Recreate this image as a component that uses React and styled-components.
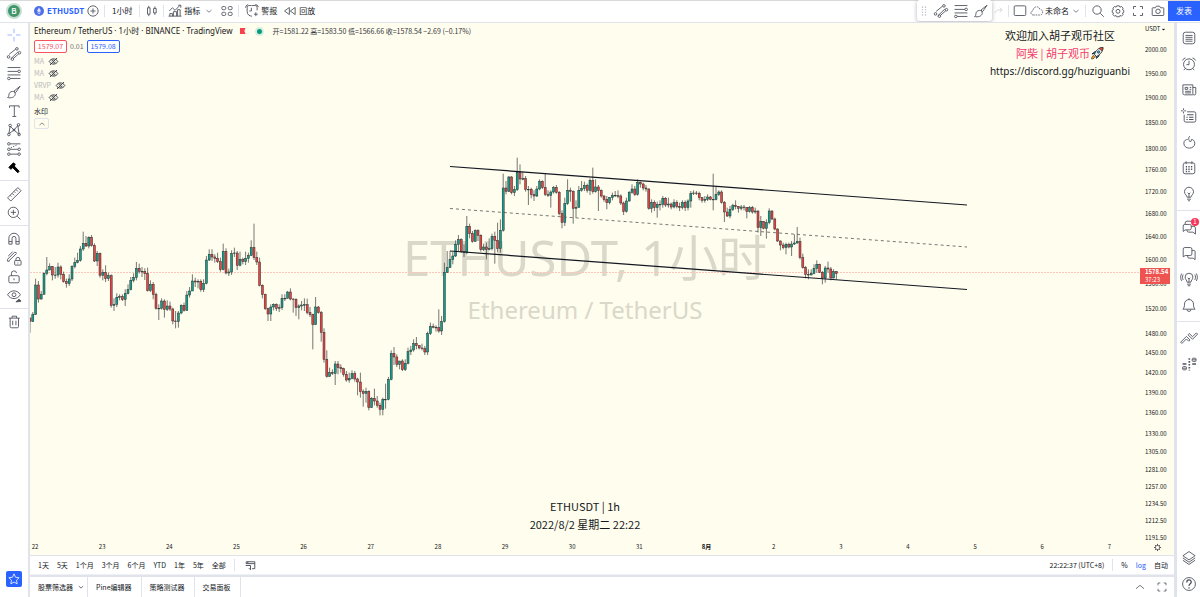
import React from "react";
import styled, { createGlobalStyle, css } from "styled-components";

const c = {
  ink: "#131722",
  icon: "#50535e",
  line: "#e0e3eb",
  blue: "#2962ff",
  red: "#ef5350",
  paper: "#fffded",
};

const Global = createGlobalStyle`
  * { box-sizing: border-box; }
  body { margin: 0; background: #fff; color: ${c.ink};
    font: 8px/12px "Noto Sans CJK SC", sans-serif; }
  button { border: 0; padding: 0; background: none; font: inherit; color: inherit; cursor: pointer; }
`;

/* ---------- icons, drawn on a 28 unit grid ---------- */

const icons = {
  cross: <path d="M14 4v7M14 17v7M4 14h7M17 14h7" />,
  channel: (
    <>
      <path d="M6.500 14.500 16.500 6.500M13 21 21.500 13.500M9 21.500 20 11" />
      <circle cx="5.500" cy="18.500" r="2" /><circle cx="18.500" cy="6" r="2" />
      <circle cx="11.500" cy="22" r="2" /><circle cx="22.500" cy="12" r="2" />
    </>
  ),
  fib: (
    <>
      <path d="M4 5.500h20M4 11.500h16M4 17h20M8 22.500h16" />
      <circle cx="22" cy="11.500" r="2" /><circle cx="6" cy="22.500" r="2" />
    </>
  ),
  brush: <path d="M12 13c-4 0-6 3-6 6 0 2-1 3-2 3.500 5 1.500 11 0 12-5 0-2-1.500-4.500-4-4.500zM14 12.500 23.500 5M16.500 15 23.500 5M14 12.500l2.500 2.500" />,
  text: <path d="M7 9V6h15v3M14.500 6v16M11.500 22.500h6" />,
  pattern: (
    <>
      <path d="M6 20 8 8l6 6 6-7 2 14-8-7-8 6" />
      <circle cx="8" cy="7" r="2" /><circle cx="21" cy="6" r="2" />
      <circle cx="6" cy="21" r="2" /><circle cx="22" cy="21" r="2" /><circle cx="14" cy="14" r="1.500" />
    </>
  ),
  forecast: (
    <>
      <path d="M8 6h16M8 14.500h12M8 22h12" /><path d="M9 12 20 7" strokeDasharray="2 2" />
      <circle cx="6" cy="6" r="2" /><circle cx="6" cy="14.500" r="2" /><circle cx="22" cy="14.500" r="2" />
      <circle cx="6" cy="22" r="2" /><circle cx="22" cy="22" r="2" />
    </>
  ),
  hammer: <path d="M6 13 13 6l3 2-1.500 3 7.500 8-2 2.500-8-8L9 16z" fill="#000" stroke="#000" />,
  ruler: <path d="M4 20 20 4l5 5L9 25zM8 16l2 2M11 13l3 3M14 10l2 2M17 7l3 3" />,
  zoom: <><circle cx="13" cy="13" r="8" /><path d="M19 19l5 5M9 13h8M13 9v8" /></>,
  magnet: <path d="M6 22V13a8 8 0 0 1 16 0v9h-5V13a3 3 0 0 0-6 0v9zM6 18h5M17 18h5" />,
  lockDraw: (
    <>
      <path d="M4 16 15 5M6 18.500 18 7M5 11l7-7M4 16v3h3M15 5l3 1" />
      <rect x="15" y="18" width="10" height="7" rx="1" /><path d="M17 18v-2a3 3 0 0 1 6 0v2M20 21v1.500" />
    </>
  ),
  lock: <><rect x="6" y="12" width="16" height="11" rx="2" /><path d="M10 12V9a4 4 0 0 1 8-1M14 16v3" /></>,
  eye: (
    <>
      <path d="M4 12c5-8 15-8 20 0-5 8-15 8-20 0z" /><circle cx="14" cy="12" r="3" />
      <path d="M17 23l5-4 3 3-5 1z" fill="currentColor" />
    </>
  ),
  trash: <path d="M6 8h17M11 8V5h7v3M8 8v13a2 2 0 0 0 2 2h9a2 2 0 0 0 2-2V8M12 12v7M17 12v7" />,
  plus: <><circle cx="14" cy="14" r="8" /><path d="M14 10v8M10 14h8" /></>,
  candles: <path d="M9 6v3M9 19v3M7 9h4v10H7zM18.500 7v3M18.500 17v3M16.500 10h4v7h-4z" />,
  indicators: <path d="M5 14l5-5 4 4 8-8M23 9V5h-4M6 22v-4h4v4M11.500 22v-7h5v7M18 22V12h4v10M4 22h20" />,
  chevron: <path d="M9 12l5 4.500 5-4.500" />,
  caret: <path d="M6 11h16l-8 7z" fill="currentColor" />,
  up: <path d="M7 17l7-6 7 6" />,
  grid: (
    <>
      <rect x="6" y="7" width="6" height="5" rx="2" /><rect x="16" y="7" width="6" height="5" rx="2" />
      <rect x="6" y="16" width="6" height="5" rx="2" /><rect x="16" y="16" width="6" height="5" rx="2" />
    </>
  ),
  grip: (
    <path d="M9 5h3M16 5h3M9 11h3M16 11h3M9 17h3M16 17h3M9 23h3M16 23h3" strokeWidth="2.500" />
  ),
  alertAdd: <path d="M13.500 5.500H9A3 3 0 0 0 6.500 9v6c0 5 4 7 7.500 7M13 9v5h-3M4 9a5 5 0 0 1 4-5M14 5.500h5A3 3 0 0 1 22 9v4M19 4a5 5 0 0 1 5 4M20 16v6M17 19h6" />,
  replay: <path d="M13 8.500v11L5.500 14zM22 8.500v11L14.500 14z" />,
  redo: <path d="M3 20c1-7 7-10 19-9M16 5l7 6-7 6" strokeWidth="2" />,
  frame: <rect x="5" y="6" width="18" height="15" rx="1.500" />,
  cloud: <path d="M8 21c-6 0-6-7-1-7.500C7 6 17 4 19 11c6 0 7 10 0 10z" strokeDasharray="3 1.500" />,
  search: <><circle cx="12.500" cy="12.500" r="6.500" /><path d="M17.500 17.500l5.500 5.500" /></>,
  gear: (
    <>
      <path d="M12 6h4l1 2 2.500-1 2.500 2.500L21 12l2 1v3l-2 1 1 2.500-2.500 2.500-2.500-1-1 2h-4l-1-2-2.500 1L6 19.500 7 17l-2-1v-3l2-1-1-2.500L8.500 7l2.500 1z" />
      <circle cx="14" cy="14.500" r="3" />
    </>
  ),
  sun: (
    <path d="M14 3v4M14 21v4M3 14h4M21 14h4M6 6l3 3M19 19l3 3M22 6l-3 3M9 19l-3 3M14 7.500a6.500 6.500 0 1 0 .1 0z" strokeWidth="2.200" />
  ),
  full: <path d="M7 11V7h4M17 7h4v4M21 17v4h-4M11 21H7v-4" />,
  camera: <><path d="M6 9h4l1.500-2.500h5L18 9h4a1 1 0 0 1 1 1v10a1 1 0 0 1-1 1H6a1 1 0 0 1-1-1V10a1 1 0 0 1 1-1z" /><circle cx="14" cy="14.500" r="3.500" /></>,
  star: <path d="M14 5l2.800 6 6.200.8-4.600 4.300 1.200 6.400L14 19.300 8.400 22.500l1.200-6.400L5 11.800l6.200-.8z" />,
  list: <><rect x="5" y="5" width="18" height="18" rx="3.500" /><path d="M8.500 10h11M8.500 13h11M8.500 16h11M8.500 19h11" /></>,
  clock: <><circle cx="14" cy="14.500" r="8.500" /><path d="M14 9v6h-4M4 8.500A6 6 0 0 1 8.500 4.500M19.500 4.500A6 6 0 0 1 24 8.500M8 21l-2 2.500M20 21l2 2.500" /></>,
  news: <><path d="M20 21.500H7a2.500 2.500 0 0 1-2.500-2.500V6H20v13.500a2 2 0 0 0 4.500 0V10H20" /><path d="M8 10h4v3H8zM15 10h2.500M15 13h2.500M8 16h9M8 18.500h9" /></>,
  data: <><path d="M11 7.500h11a2.500 2.500 0 0 1 2.500 2.500v11a2.500 2.500 0 0 1-2.500 2.500H9A2.500 2.500 0 0 1 6.500 21V12" /><path d="M5.500 2v8M1.500 6h8" strokeDasharray="3 2" /><path d="M11 12h10M10 16h2M14 16h7M10 19.500h2M14 19.500h7" strokeWidth="1.800" /></>,
  flame: <path d="M15 5c-3 4-1 6 1 9 1-1 2-2 2-4 2 0 5 2 5 6 0 10-17 10-17 0 0-5 4-6 6-6" />,
  calendar: <><rect x="5" y="6" width="18" height="17" rx="3" /><path d="M9.500 3.500V8M18.500 3.500V8" /><path d="M9 12h2M13 12h2M17 12h2M9 16h2M13 16h2M17 16h2M9 19.500h2M13 19.500h2" strokeWidth="2.200" /></>,
  bulb: <path d="M11 19c0-3-4-4-4-8.500a7 7 0 0 1 14 0c0 4.500-4 5.500-4 8.500zM11 22h6M12.500 24.500h3M12 12l2 2 2-2M14 14v5" />,
  chats: <path d="M8 10V8a3 3 0 0 1 3-3h8M5 21v-8.500A2.500 2.500 0 0 1 7.500 10H15a2.500 2.500 0 0 1 2.500 2.500V16A2.500 2.500 0 0 1 15 18.500H8zM11 18.500v1A2.500 2.500 0 0 0 13.500 22H20l4 3V15.500a2.500 2.500 0 0 0-2.500-2.500h-4" />,
  chat: <path d="M5 20V8a2.500 2.500 0 0 1 2.500-2.500H16A2.500 2.500 0 0 1 18.500 8v7.500A2.500 2.500 0 0 1 16 18H8zM12 18v2a2 2 0 0 0 2 2h6.500l3 2.500V12a2 2 0 0 0-2-2h-3" />,
  stream: <path d="M11 19c0-3-3-4-3-8a6 6 0 0 1 12 0c0 4-3 5-3 8zM11 22h6M12 24.500h4M12 12l2 2 2-2M14 14v5M5 7c-1.500 2.500-1.500 6 0 8.500M2.500 5.500c-2 4-2 7.500 0 11.500M23 7c1.500 2.500 1.500 6 0 8.500M25.500 5.500c2 4 2 7.500 0 11.500" />,
  bell: <path d="M4.500 20.500h19c-2-2-2.500-4-2.500-8a7 7 0 0 0-14 0c0 4-.5 6-2.500 8zM11 21a3 3 0 0 0 6 0M14 5.500V3.500" />,
  order: <path d="M1 20.500 10 11.500l5.500 5.500-2 2-3.500-3.500-7 7zM12.500 9l2-2 5 5L25.500 6l2 2-8 8z" />,
  dom: (
    <>
      <rect x="4" y="18" width="6" height="5" rx="1.500" /><path d="M4 20.500h6" />
      <rect x="19" y="5" width="6" height="5" rx="1.500" /><path d="M19 7.500h6" />
      <path d="M14.500 5v19" strokeWidth="2.500" strokeDasharray="2.500 2" />
      <path d="M19 14h6M4 14h6" strokeWidth="2" />
    </>
  ),
  layers: <path d="M14 4l9.500 6.500L14 17 4.500 10.500zM4.500 14 14 20.500l9.500-6.500M4.500 17.500 14 24l9.500-6.500" />,
  help: <><circle cx="14" cy="14" r="10" /><path d="M10.500 11.500c0-5 7-5 7-.5 0 3-3.500 2.500-3.500 6M14 19v2" strokeWidth="2" /></>,
  goto: <path d="M6 11V7h16v13h-5M9 7v4M6 10.500h16M14 14v8l-3-3M5 14h9" strokeWidth="1.800" />,
  hidden: <path d="M3 14c5-9 17-9 22 0-5 9-17 9-22 0zM5 23 23 5M10 14a4 4 0 0 1 5-4M18 14a4 4 0 0 1-5 4" strokeWidth="2.200" />,
};

const Svg = styled.svg`
  display: block;
  flex: none;
  width: ${(p) => p.$size}px;
  height: ${(p) => p.$size}px;
  fill: none;
  stroke: currentColor;
  stroke-width: 1.4;
`;
const Icon = ({ name, size = 18 }) => (
  <Svg $size={size} viewBox="0 0 28 28" aria-hidden="true">{icons[name]}</Svg>
);

/* ---------- page frame ---------- */

const Page = styled.div`
  display: flex;
  flex-direction: column;
  min-height: 100vh;
`;
const Header = styled.header`
  display: flex;
  align-items: center;
  height: 22px;
  border-top: 1px solid #d9d9d9;
  padding: 0 0 2px 6px;
  white-space: nowrap;
`;
const Body = styled.div`
  flex: 1;
  display: flex;
`;
const Rail = styled.nav`
  flex: none;
  display: flex;
  flex-direction: column;
  align-items: stretch;
  width: ${(p) => p.$width}px;
  padding-top: 2px;
  border-top: 1px solid ${c.line};
`;
const RailButton = styled.button`
  display: flex;
  align-items: center;
  justify-content: center;
  position: relative;
  height: ${(p) => p.$h}px;
  color: ${(p) => p.$color || c.icon};
`;
const RailRule = styled.hr`
  width: 100%;
  height: 1px;
  margin: 3px 0;
  border: 0;
  background: ${c.line};
`;
const Push = styled.div`
  margin-top: auto;
`;
const StarButton = styled.button`
  display: grid;
  place-items: center;
  width: 16px;
  height: 16px;
  margin: auto auto 10px 6px;
  border-radius: 2px;
  background: ${c.blue};
  color: #fff;
`;
const Badge = styled.span`
  position: absolute;
  top: 4px;
  right: 1px;
  width: 8px;
  height: 8px;
  border-radius: 50%;
  background: #f7365b;
  color: #fff;
  font-size: 6px;
  line-height: 8px;
  text-align: center;
`;

/* ---------- header parts ---------- */

const Avatar = styled.button`
  width: 16px;
  height: 16px;
  margin-right: 12px;
  border: 2px solid #c6dfd2;
  border-radius: 50%;
  background: #43966b;
  color: #fff;
  font-size: 8px;
  font-weight: 500;
  line-height: 12px;
`;
const Tool = styled.button`
  flex: none;
  display: flex;
  align-items: center;
  justify-content: center;
  gap: ${(p) => p.$gap || 0}px;
  min-width: ${(p) => p.$w || 20}px;
  height: 18px;
  color: ${(p) => p.$color || c.icon};
  font-weight: ${(p) => (p.$bold ? 700 : 400)};
`;
const Label = styled.span`
  color: ${(p) => p.$color || c.ink};
`;
const Rule = styled.span`
  flex: none;
  width: 1px;
  height: 12px;
  margin: 0 ${(p) => p.$gap || 2}px;
  background: ${c.line};
`;
const HeaderEnd = styled.div`
  display: flex;
  align-items: center;
  margin-left: auto;
`;
const Favorites = styled.div`
  display: flex;
  align-items: center;
  height: 21px;
  padding: 0 1px;
  border-radius: 3px;
  background: #fff;
  box-shadow: 0 1px 4px rgba(30, 34, 50, 0.35);
`;
const Grip = styled.span`
  width: 12px;
  color: #b2b5be;
`;
const Publish = styled.button`
  width: 32px;
  height: 19px;
  background: ${c.blue};
  box-shadow: 0 1px 0 ${c.blue};
  color: #fff;
`;

/* ---------- chart ---------- */

const Center = styled.main`
  flex: 1;
  min-width: 0;
  display: flex;
  flex-direction: column;
  border: solid ${c.line};
  border-width: 1px 3px 0 2px;
`;
const Chart = styled.section`
  flex: 1;
  display: grid;
  grid-template: minmax(0, 1fr) 15px / minmax(0, 1fr) 34px;
  background: ${c.paper};
`;
const Plot = styled.div`
  position: relative;
  display: grid;
  min-height: 516px;
`;
const Layer = styled.svg`
  position: absolute;
  inset: 0;
  width: 100%;
  height: 100%;
`;
const Watermark = styled.div`
  position: absolute;
  inset: 204px 0 auto;
  text-align: center;
  color: #d9d8c9;
  white-space: nowrap;
  font-family: "Noto Sans", "Noto Sans CJK SC", sans-serif;
`;
const WatermarkLine = styled.div`
  font-size: ${(p) => (p.$small ? 24 : 49)}px;
  line-height: ${(p) => (p.$small ? 46 : 60)}px;
`;
const Legend = styled.div`
  position: absolute;
  top: 2px;
  left: 4px;
  display: flex;
  flex-direction: column;
  align-items: flex-start;
  white-space: nowrap;
`;
const LegendRow = styled.div`
  display: flex;
  align-items: center;
  gap: ${(p) => p.$gap || 3}px;
  height: ${(p) => p.$h || 12}px;
  color: ${(p) => (p.$off ? "#b8b9bb" : c.ink)};
  font-size: 7px;
`;
const Title = styled.h1`
  margin: 0;
  font: 400 8px/12px "Noto Sans", "Noto Sans CJK SC", sans-serif;
`;
const Ohlc = styled.span`
  color: #33363f;
  margin-left: 6px;
`;
const Dot = styled.span`
  width: 9px;
  height: 9px;
  margin-left: 6px;
  border: 2px solid #d2efdd;
  border-radius: 50%;
  background: #089981;
`;
const Flag = styled.span`
  width: 6px;
  height: 6px;
  margin-left: 4px;
  background: #f7414e;
  clip-path: polygon(0 0, 100% 0, 80% 50%, 100% 100%, 0 100%);
`;
const Quote = styled.button`
  width: 33px;
  height: 13px;
  border: 1px solid ${(p) => p.$color};
  border-radius: 2px;
  background: #fff;
  color: ${(p) => p.$color};
  font-size: 7px;
  line-height: 11px;
`;
const Spread = styled.span`
  color: #6a6d78;
`;
const Collapse = styled.button`
  display: grid;
  place-items: center;
  width: 15px;
  height: 11px;
  border: 1px solid ${c.line};
  border-radius: 2px;
`;
const Note = styled.div`
  position: absolute;
  ${(p) =>
    p.$place === "top"
      ? css`top: 3px; right: 10px;`
      : css`bottom: 7px; left: 0; right: 0;`}
  text-align: center;
  font-size: 11px;
  line-height: 18px;
  white-space: nowrap;
`;
const NoteLine = styled.div`
  display: flex;
  align-items: center;
  justify-content: center;
  color: ${(p) => p.$color || c.ink};
`;
const NoteLink = styled.a`
  color: inherit;
  font-family: "Noto Sans", sans-serif;
  font-size: 10px;
  text-decoration: none;
`;
const PriceAxis = styled.div`
  position: relative;
  font-size: 6px;
  line-height: 10px;
`;
const Currency = styled.button`
  display: flex;
  align-items: center;
  gap: 1px;
  height: 12px;
  padding-left: 5px;
`;
const PriceTick = styled.span`
  position: absolute;
  left: 5px;
  transform: translateY(-50%);
`;
const PriceTag = styled.div`
  position: absolute;
  left: 0;
  width: 30px;
  padding: 0 5px;
  background: ${c.red};
  color: #fff;
  line-height: 8px;
`;
const TimeAxis = styled.div`
  position: relative;
  font-size: 6px;
  line-height: 14px;
`;
const TimeTick = styled.span`
  position: absolute;
  transform: translateX(-50%);
  font-weight: ${(p) => (p.$strong ? 700 : 400)};
`;
const AxisSettings = styled.button`
  display: grid;
  place-items: center;
  height: 15px;
`;

/* ---------- bars below the chart ---------- */

const RangeBar = styled.div`
  display: flex;
  align-items: center;
  height: 20px;
  padding: 0 6px 0 8px;
  border-top: 1px solid ${c.line};
  border-bottom: 1px solid #f0f1f5;
  font-size: 7px;
  white-space: nowrap;
`;
const Ranges = styled.div`
  display: flex;
  gap: 8px;
`;
const PanelBar = styled.div`
  display: flex;
  align-items: stretch;
  height: 22px;
  border-top: 2px solid ${c.line};
  font-size: 7px;
  white-space: nowrap;
`;
const PanelTab = styled.button`
  display: flex;
  align-items: center;
  gap: 2px;
  padding: 0 ${(p) => (p.$menu ? 0 : 9)}px 0 8px;
  border-right: 1px solid ${c.line};
`;

/* ---------- data ---------- */

// Each candle is "close high low", in thirds of a pixel below the block's base line.
const blocks = [
  [188, `331 320 365,311 303 333,222 203 312,264 210 275,250 240 266,187 184 250,177 138 193,167 157 178,192 165 208,192 168 203,168 155 200,190 163 205,212 182 215,218 203 230,204 190 225,166 163 210,155 140 172,148 125 157,114 105 152,97 62 120,105 75 108,79 76 112,104 72 107,150 97 153,127 120 165,193 125 200,185 175 208,203 163 213,194 185 210,283 190 290,280 262 300,259 247 288,257 250 268,266 250 270,248 235 285,236 220 250,208 198 238,200 187 214,172 153 208,181 158 188,181 168 198,188 172 207,239 170 242,220 208 243,250 213 265,292 245 296,292 280 327,270 262 296,295 265 320,285 268 300,294 272 300,330 290 340,332 300 352,306 300 350,283 280 310,298 275 302,252 240 300,240 228 260,210 190 240,213 200 228,211 205 232,236 205 242,217 205 243,147 135 220,130 115 150,138 115 150,142 130 155,152 125 156,176 140 182,121 98 178,186 112 190,183 173 195,128 118 192,126 110 138,163 120 177,145 122 166,152 140 160,142 122 162,133 125 155,110 88 135,140 38 147,153 122 162,223 140 226,250 220 262,293 248 297,309 290 330,288 280 330,280 277 298,292 277 300,290 280 303,262 250 297,262 250 270,243 240 262,264 232 268,265 262 305,290 262 315,285 280 325,282 270 298,281 262 300,305 263 310,311 288 318,341 308 415,288 258 342,305 285 308,364 300 392,445 352 455,496 418 500,485 470 498,487 475 492,459 450 522,470 450 490,473 460 485,490 470 497,507 480 512,502 485 515,488 478 505,504 480 512,513 500 553,542 485 560,547 535 587,541 530 575,590 538 598,562 558 590,570 533 583,583 555 590,595 575 613,565 560 613,565 518 593,505 498 568,428 418 508,438 408 462,460 430 468,450 450 475,476 445 480,457 445 480,422 410 460,417 405 432,398 385 422,404 378 415,411 402 415,413 398 418,423 405 432,368 362 432,347 335 372,349 338 352,350 343 362,360 295 365,332 315 372,184 155 335,170 120 186,146 120 170,135 123 160,100 88 138,86 72 120,122 82 126,124 100 138,46 15 130,68 38 82,91 60 95,59 55 92,73 55 90,116 70 122,108 98 120,115 95 145,113 82 118,76 68 118,88 62 158,113 35 124`],
  [118, `268 235 335,141 98 272,151 120 160,108 105 153,155 105 160,146 135 165,94 50 150,114 70 130,113 92 118,145 105 152,145 135 192,161 140 172,165 148 180,144 135 168,121 115 148,140 118 144,160 98 165,163 148 168,153 148 200,140 135 158,154 132 158,218 150 223,244 208 262,188 170 255,148 115 192,151 140 182,202 148 248,199 178 230,148 135 200,143 120 152,133 122 150,148 128 155,118 112 162,152 80 158,138 115 155,148 132 210,165 145 170,176 162 182,185 165 205,170 168 190,163 155 178,164 150 168,165 148 172,186 160 192,211 182 222,180 170 215,154 150 182,144 130 158,160 135 165,124 115 164,129 122 140,141 125 148,144 132 152,202 142 206,184 175 215,200 178 210,190 182 230,190 178 208,172 165 200,192 168 198,189 170 200,198 185 205,185 175 202,196 178 202,200 185 210,184 178 205,200 178 210,180 175 208,158 150 200,156 148 162,157 150 162,170 152 178,178 168 185,175 165 185,168 160 180,175 165 178,176 98 208,160 138 178,153 148 165,184 148 188,213 180 243,225 200 228,205 195 232,194 188 210,197 178 205,202 195 215,198 192 208,200 192 208,211 198 232,200 195 215,213 195 218,210 200 218,260 208 275,241 225 285,262 240 265,245 235 293,210 202 250,234 208 237,264 230 268,300 262 303,312 298 328,320 305 325,310 305 340,318 305 322,309 300 345,306 280 312,302 258 308,350 290 355,380 338 383,400 375 412,402 385 415,397 385 403,382 370 400,370 358 395,394 368 396,411 390 430,381 375 425,384 362 395,411 378 418,392 385 412,398 390 415`],
];

const candles = blocks
  .flatMap(([base, rows]) =>
    rows.split(",").map((row) => row.split(" ").map((v) => base + Number(v) / 3))
  )
  .map(([close, high, low], i, all) => ({
    x: 2.8 * i, close, high, low, open: i ? all[i - 1][0] : 295,
  }));

const PLOT_W = 1110;
const PLOT_H = 517;
const prices = [2000, 1950, 1900, 1850, 1800, 1760, 1720, 1680, 1640, 1600, 1560, 1520, 1480, 1450, 1420, 1390, 1360, 1330, 1305, 1281, 1257, 1234.5, 1212.5, 1191.5];
const priceTop = (p) => `${((27 + 942 * Math.log(2000 / p)) / PLOT_H) * 100}%`;
const days = ["22", "23", "24", "25", "26", "27", "28", "29", "30", "31", "8月", "2", "3", "4", "5", "6", "7"];
const dayLeft = (i) => `${((5 + 67.15 * i) / PLOT_W) * 100}%`;

const Candle = ({ x, open, close, high, low }) => {
  const top = Math.min(open, close);
  return (
    <g>
      <path d={`M${x} ${high}V${low}`} stroke="#3c3c3c" strokeWidth="0.7" />
      <rect
        x={x - 1} y={top} width="2" height={Math.max(Math.abs(open - close), 0.6)}
        fill={close <= open ? "#139d8b" : "#ee4140"} stroke="#26302f" strokeWidth="0.5"
      />
    </g>
  );
};

const leftTools = [
  ["cross", "channel", "fib", "brush", "text", "pattern", "forecast", "hammer"],
  ["ruler", "zoom"],
  ["magnet", "lockDraw", "lock", "eye"],
  ["trash"],
];
const rightTools = [
  ["list", "clock", "news", "data", "flame", "calendar", "bulb"],
  ["chats", "chat", "stream", "bell"],
  ["order", "dom"],
];

const RailGroups = ({ groups, h }) =>
  groups.map((group, i) => (
    <React.Fragment key={group[0]}>
      {i > 0 && <RailRule />}
      {group.map((name) => (
        <RailButton key={name} $h={h} $color={name === "cross" ? "#8fb0ff" : undefined} aria-label={name}>
          <Icon name={name} />
          {name === "chats" && <Badge>1</Badge>}
        </RailButton>
      ))}
    </React.Fragment>
  ));

const Rocket = () => (
  <svg width="14" height="14" viewBox="0 0 28 28" aria-hidden="true">
    <path d="M4 16l6-5 4 1 4 4 0 4-5 5-1-6-4-4z" fill="#1d8fc4" stroke="#111" strokeWidth="1.500" />
    <path d="M9 17C11 9 17 3 26 3c0 8-5 14-13 18z" fill="#eef0f2" stroke="#111" strokeWidth="1.500" />
    <path d="M26 3c0 3-1 5-2 7l-6-5c2-1 5-2 8-2z" fill="#e9573f" stroke="#111" />
    <circle cx="17" cy="12" r="2.500" fill="#2ba7df" stroke="#111" />
    <path d="M3 26c0-4 2-7 5-7l2 2c0 3-3 5-7 5z" fill="#f59b23" stroke="#111" />
  </svg>
);

export default function App() {
  return (
    <Page>
      <Global />
      <Header>
        <Avatar aria-label="B">B</Avatar>
        <Tool $bold $gap={3} $color={c.blue}>
          <svg width="10" height="10" viewBox="0 0 20 20" aria-hidden="true">
            <circle cx="10" cy="10" r="10" fill="#4f6fe8" />
            <path d="M10 3l4 7-4 2.500L6 10zM6 11.500l4 2.500 4-2.500-4 5.500z" fill="#dfe6ff" />
          </svg>
          ETHUSDT
        </Tool>
        <Tool $w={18} aria-label="compare"><Icon name="plus" /></Tool>
        <Rule />
        <Tool $w={30}><Label>1小时</Label></Tool>
        <Rule />
        <Tool $w={19} aria-label="candles"><Icon name="candles" /></Tool>
        <Rule />
        <Tool $w={34}><Icon name="indicators" /><Label>指标</Label></Tool>
        <Tool $w={18} aria-label="more"><Icon name="chevron" size={14} /></Tool>
        <Tool $w={17} aria-label="templates"><Icon name="grid" /></Tool>
        <Rule />
        <Tool $w={38}><Icon name="alertAdd" /><Label>警报</Label></Tool>
        <Tool $w={38}><Icon name="replay" /><Label>回放</Label></Tool>
        <HeaderEnd>
          <Favorites>
            <Grip><Icon name="grip" size={12} /></Grip>
            <Tool $w={21} aria-label="channel"><Icon name="channel" /></Tool>
            <Tool $w={20} aria-label="fib"><Icon name="fib" /></Tool>
            <Tool $w={20} aria-label="brush"><Icon name="brush" /></Tool>
          </Favorites>
          <Tool $w={14} $color="#c9cbd1" aria-label="redo"><Icon name="redo" size={10} /></Tool>
          <Rule />
          <Tool $w={16} aria-label="layout"><Icon name="frame" /></Tool>
          <Tool $w={40}><Icon name="cloud" size={16} /><Label>未命名</Label></Tool>
          <Tool $w={12} aria-label="more"><Icon name="chevron" size={14} /></Tool>
          <Rule />
          <Tool aria-label="search"><Icon name="search" /></Tool>
          <Tool aria-label="settings"><Icon name="gear" /></Tool>
          <Tool aria-label="full screen"><Icon name="full" /></Tool>
          <Tool aria-label="snapshot"><Icon name="camera" /></Tool>
          <Publish>发表</Publish>
        </HeaderEnd>
      </Header>

      <Body>
        <Rail $width={28}>
          <RailGroups groups={leftTools} h={19} />
          <StarButton aria-label="favorites"><Icon name="star" size={16} /></StarButton>
        </Rail>

        <Center>
          <Chart>
            <Plot>
              <Watermark>
                <WatermarkLine>ETHUSDT, 1小时</WatermarkLine>
                <WatermarkLine $small>Ethereum / TetherUS</WatermarkLine>
              </Watermark>
              <Layer viewBox={`0 0 ${PLOT_W} ${PLOT_H}`} preserveAspectRatio="none">
                <path d="M0 249.500H1110" stroke="#fbc5bc" strokeWidth="1" strokeDasharray="2 1" />
                {candles.map((k) => <Candle key={k.x} {...k} />)}
                <path d="M420 143.500 937 182M420 228 937 266.500" stroke="#131722" strokeWidth="1.200" />
                <path d="M420 185.500 937 224" stroke="#555" strokeWidth="0.800" strokeDasharray="3 3" />
              </Layer>
              <Legend>
                <LegendRow>
                  <Title>Ethereum / TetherUS · 1小时 · BINANCE · TradingView</Title>
                  <Flag /><Dot />
                  <Ohlc>开=1581.22 高=1583.50 低=1566.66 收=1578.54 −2.69 (−0.17%)</Ohlc>
                </LegendRow>
                <LegendRow $h={18}>
                  <Quote $color="#f7525f">1579.07</Quote>
                  <Spread>0.01</Spread>
                  <Quote $color={c.blue}>1579.08</Quote>
                </LegendRow>
                {["MA", "MA", "VRVP", "MA"].map((name, i) => (
                  <LegendRow key={i} $off $gap={4}>
                    {name}
                    <RailButton $h={12} $color="#2a2e39" aria-label="show"><Icon name="hidden" size={11} /></RailButton>
                  </LegendRow>
                ))}
                <LegendRow $h={15}>水印</LegendRow>
                <Collapse aria-label="collapse"><Icon name="up" size={10} /></Collapse>
              </Legend>
              <Note $place="top">
                <NoteLine>欢迎加入胡子观币社区</NoteLine>
                <NoteLine $color="#f23a6d">阿柴 | 胡子观币<Rocket /></NoteLine>
                <NoteLine><NoteLink href="https://discord.gg/huziguanbi">https://discord.gg/huziguanbi</NoteLink></NoteLine>
              </Note>
              <Note $place="bottom">
                <NoteLine>ETHUSDT | 1h</NoteLine>
                <NoteLine>2022/8/2 星期二 22:22</NoteLine>
              </Note>
            </Plot>
            <PriceAxis>
              <Currency>USDT<Icon name="caret" size={5} /></Currency>
              {prices.map((p) => (
                <PriceTick key={p} style={{ top: priceTop(p) }}>{p.toFixed(2)}</PriceTick>
              ))}
              <PriceTag style={{ top: priceTop(1586) }}>
                <strong>1578.54</strong><br />37:23
              </PriceTag>
            </PriceAxis>
            <TimeAxis>
              {days.map((d, i) => (
                <TimeTick key={d} $strong={d === "8月"} style={{ left: dayLeft(i) }}>{d}</TimeTick>
              ))}
            </TimeAxis>
            <AxisSettings aria-label="axis settings"><Icon name="sun" size={9} /></AxisSettings>
          </Chart>

          <RangeBar>
            <Ranges>
              {["1天", "5天", "1个月", "3个月", "6个月", "YTD", "1年", "5年", "全部"].map((r) => (
                <button key={r}>{r}</button>
              ))}
            </Ranges>
            <Rule $gap={8} />
            <Tool $w={12} aria-label="go to date"><Icon name="goto" size={15} /></Tool>
            <HeaderEnd>
              <button>22:22:37 (UTC+8)</button>
              <Rule $gap={8} />
              <Ranges>
                <button>%</button>
                <button><Label $color={c.blue}>log</Label></button>
                <button>自动</button>
              </Ranges>
            </HeaderEnd>
          </RangeBar>
          <PanelBar>
            <PanelTab $menu>股票筛选器<Icon name="chevron" size={12} /></PanelTab>
            <PanelTab>Pine编辑器</PanelTab>
            <PanelTab>策略测试器</PanelTab>
            <PanelTab>交易面板</PanelTab>
            <HeaderEnd>
              <Tool aria-label="open panel"><Icon name="up" size={16} /></Tool>
              <Tool $w={24} aria-label="maximize panel"><Icon name="full" size={16} /></Tool>
            </HeaderEnd>
          </PanelBar>
        </Center>

        <Rail $width={23}>
          <RailGroups groups={rightTools} h={26} />
          <Push />
          <RailButton $h={26} aria-label="layers"><Icon name="layers" /></RailButton>
          <RailButton $h={26} aria-label="help"><Icon name="help" /></RailButton>
        </Rail>
      </Body>
    </Page>
  );
}
